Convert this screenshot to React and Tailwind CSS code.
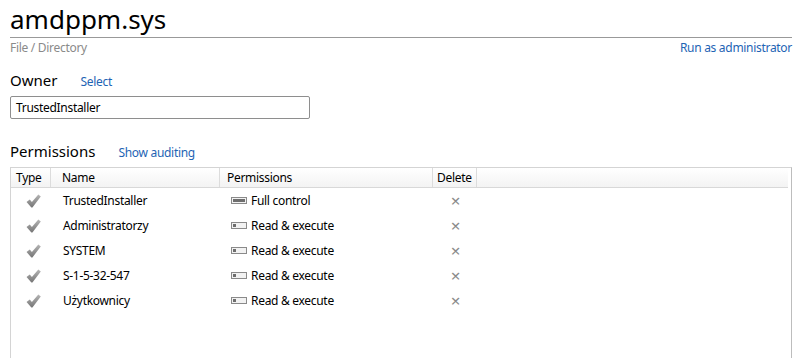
const rows = [
  { name: "TrustedInstaller", perm: "Full control", full: true },
  { name: "Administratorzy", perm: "Read & execute" },
  { name: "SYSTEM", perm: "Read & execute" },
  { name: "S-1-5-32-547", perm: "Read & execute" },
  { name: "Użytkownicy", perm: "Read & execute" },
];

function Check() {
  return (
    <svg width="15" height="14" viewBox="0 0 14 13">
      <defs>
        <linearGradient id="chk" x1="0" y1="0" x2="0" y2="1">
          <stop offset="0" stopColor="#b5b5b5" />
          <stop offset="1" stopColor="#767676" />
        </linearGradient>
      </defs>
      <path d="M0.5 7.5 L3.5 5 L5.5 7.5 L11.5 0.5 L13.8 2.3 L6 12.5 L5 12.5 Z" fill="url(#chk)" />
    </svg>
  );
}

function PermIcon({ full }) {
  return (
    <span className="inline-flex items-center w-[16px] h-[7px] border border-[#8a8a8a] bg-[#f2f2f2] p-[1px] mr-[4px]">
      {full ? (
        <span className="w-full h-full bg-[#6e6e6e]" />
      ) : (
        <span className="w-[3px] h-full bg-[#6e6e6e]" />
      )}
    </span>
  );
}

export default function App() {
  return (
    <div className="w-[799px] h-[358px] bg-white overflow-hidden font-['Noto_Sans',sans-serif] text-[12px] tracking-[-0.3px] text-[#1e1e1e]">
      <div className="pl-[10px] pr-[7px]">
        <h1 className="text-[26px] leading-[32px] pt-[3px] tracking-normal text-black">amdppm.sys</h1>
        <div className="border-b border-[#999] mt-[2px]" />
        <div className="flex justify-between leading-[18px] pt-[1px]">
          <span className="text-[#8a8a8a]">File / Directory</span>
          <span className="text-[#1e64b4]">Run as administrator</span>
        </div>

        <div className="flex items-baseline mt-[12px]">
          <span className="text-[15px] tracking-normal text-black">Owner</span>
          <span className="ml-[23px] text-[#1e64b4]">Select</span>
        </div>
        <div className="mt-[4px] w-[300px] h-[23px] border border-[#8e8e8e] rounded-[2px] px-[5px] leading-[21px] text-black">
          TrustedInstaller
        </div>

        <div className="flex items-baseline mt-[21px]">
          <span className="text-[15px] tracking-normal text-black">Permissions</span>
          <span className="ml-[23px] text-[#1e64b4]">Show auditing</span>
        </div>

        <div className="mt-[5px] h-[200px] border border-[#d4d4d4] border-r-[#bdbdbd]">
          <div className="flex h-[20px] items-center mr-[3px] border-b border-[#d8d8d8] bg-gradient-to-b from-white to-[#f3f3f3] text-black">
            <div className="w-[40px] pl-[5px] border-r border-[#dcdcdc] h-full leading-[20px]">Type</div>
            <div className="w-[169px] pl-[11px] border-r border-[#dcdcdc] h-full leading-[20px]">Name</div>
            <div className="w-[213px] pl-[7px] border-r border-[#dcdcdc] h-full leading-[20px]">Permissions</div>
            <div className="w-[44px] pl-[4px] border-r border-[#dcdcdc] h-full leading-[20px]">Delete</div>
          </div>
          {rows.map((r) => (
            <div key={r.name} className="flex items-center h-[25px] text-black">
              <div className="w-[40px] flex justify-center pl-[4px] pt-[1px]">
                <Check />
              </div>
              <div className="w-[169px] pl-[12px]">{r.name}</div>
              <div className="w-[213px] pl-[11px] flex items-center">
                <PermIcon full={r.full} />
                {r.perm}
              </div>
              <div className="w-[44px] flex justify-center pl-[1px] text-[#8a8a8a] text-[17px] leading-[17px]">×</div>
            </div>
          ))}
        </div>
      </div>
    </div>
  );
}
